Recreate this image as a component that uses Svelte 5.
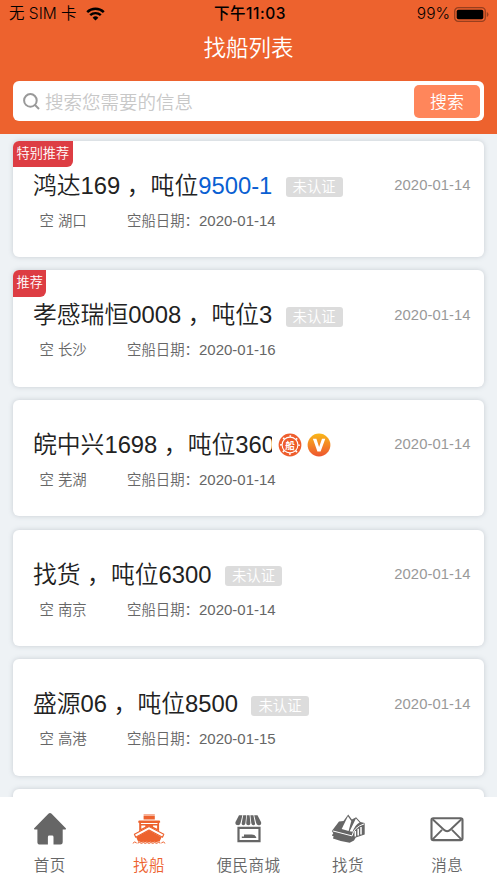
<script>
	const ships = [
		{ name: '鸿达169', tonnage: '9500-1', link: true, port: '湖口', empty: '2020-01-14', date: '2020-01-14', badge: '特别推荐' },
		{ name: '孝感瑞恒0008', tonnage: '3', port: '长沙', empty: '2020-01-16', date: '2020-01-14', badge: '推荐' },
		{ name: '皖中兴1698', tonnage: '360', port: '芜湖', empty: '2020-01-14', date: '2020-01-14', verified: true },
		{ name: '找货', tonnage: '6300', port: '南京', empty: '2020-01-14', date: '2020-01-14' },
		{ name: '盛源06', tonnage: '8500', port: '高港', empty: '2020-01-15', date: '2020-01-14' }
	]

	const tabs = [
		{ id: 'home', label: '首页' },
		{ id: 'ship', label: '找船' },
		{ id: 'shop', label: '便民商城' },
		{ id: 'cargo', label: '找货' },
		{ id: 'message', label: '消息' }
	]

	let keyword = $state('')
	let active = $state('ship')
</script>

<div class="app">
	<header>
		<div class="status">
			<div class="carrier">
				<span>无 SIM 卡</span>
				<svg width="19" height="14" viewBox="0 0 19 14">
					<path d="M1.2 5.1a12 12 0 0 1 16.6 0" fill="none" stroke="#000" stroke-width="2.5" />
					<path d="M4.2 8.2a7.7 7.7 0 0 1 10.6 0" fill="none" stroke="#000" stroke-width="2.4" />
					<path d="M6.6 10.7a4.2 4.2 0 0 1 5.8 0L9.5 13.6z" />
				</svg>
			</div>
			<div class="clock">下午11:03</div>
			<div class="battery">
				<span>99%</span>
				<svg width="35" height="15" viewBox="0 0 35 15">
					<rect x=".7" y=".7" width="30.6" height="13.6" rx="3.6" fill="none" stroke="#983f1e" stroke-width="1.3" />
					<rect x="2.7" y="2.7" width="26.6" height="9.6" rx="1.8" />
					<path d="M32.8 5v5q1.7-.7 1.7-2.5T32.8 5z" fill="#983f1e" />
				</svg>
			</div>
		</div>
		<h1>找船列表</h1>
		<div class="search">
			<svg width="17" height="17" viewBox="0 0 17 17" fill="none" stroke="#999" stroke-width="2">
				<circle cx="7.4" cy="7.4" r="6.3" />
				<path d="M12 12l4 4" />
			</svg>
			<input bind:value={keyword} placeholder="搜索您需要的信息" />
			<button>搜索</button>
		</div>
	</header>

	<main>
		{#each ships as ship (ship.name)}
			<article class="card">
				{#if ship.badge}
					<span class="badge">{ship.badge}</span>
				{/if}
				<div class="top">
					<h2>{ship.name}<span class="comma">，</span>吨位<span class:link={ship.link}>{ship.tonnage}</span></h2>
					{#if ship.verified}
						<svg class="mark" width="24" height="24" viewBox="0 0 24 24">
							<circle cx="12" cy="12" r="11.4" fill="#ee5d2c" />
							<circle cx="12" cy="12" r="7.9" fill="none" stroke="#fff" stroke-width="1.1" />
							<circle cx="12" cy="12" r="9" fill="none" stroke="#fff" stroke-width="1.7" stroke-dasharray="1.7 5.37" stroke-dashoffset=".85" />
							<text x="12" y="15.7" text-anchor="middle" class="seal">船</text>
						</svg>
						<svg class="mark" width="24" height="24" viewBox="0 0 24 24">
							<defs>
								<linearGradient id="vip" x1="0" y1="0" x2="0" y2="1">
									<stop offset="0" stop-color="#f9b719" />
									<stop offset="1" stop-color="#ee5530" />
								</linearGradient>
							</defs>
							<circle cx="12" cy="12" r="11.4" fill="url(#vip)" />
							<path d="M5.9 5.8h3.5l2.7 8.3 2.9-8.3h3.3l-4.7 12.7h-3.2z" fill="#fff" />
						</svg>
					{:else}
						<span class="tag">未认证</span>
					{/if}
					<time>{ship.date}</time>
				</div>
				<div class="info">
					<span class="port">空 {ship.port}</span>
					<span>空船日期：<span class="num">{ship.empty}</span></span>
				</div>
			</article>
		{/each}
		<article class="card"></article>
	</main>

	<nav>
		{#each tabs as tab (tab.id)}
			<button class="tab" class:active={active === tab.id} onclick={() => (active = tab.id)}>
				<svg width="34" height="34" viewBox="0 0 34 34" fill="currentColor">
					{#if tab.id === 'home'}
						<path d="M15.4 1.8q1.6-1.4 3.2 0l14.2 14.4q.7.8-.3 1.3h-2.8v12.7q0 2.3-2.3 2.3h-6.9v-7.6q0-1.4-1.4-1.4h-2.8q-1.4 0-1.4 1.4v7.6H7.1q-2.7 0-2.7-2.3V17.5H1.7q-1.3-.4-.5-1.3z" />
					{:else if tab.id === 'ship'}
						<path d="M11.6 2.4h11.2v1H11.6zM11.6 4h11.2v3.5H11.6z" />
						<path fill-rule="evenodd" d="M7.4 8.4h19.8q.9 0 .9.9v1.4h-1v8.5L17 14.6l-9.8 4.6v-8.5H6.3V9.300q0-.9 1.100-.9zM8.900 11v1h16.600v-1zM9.300 13.500v3.200l4-1.900v-1.300zM25.100 13.500h-4v1.300l4 1.900z" />
						<path d="M17 14.500l14.800 7.700-1.300 3L17 18 3.700 25.200l-1.300-3z" fill="#fff" stroke="currentColor" stroke-width="1.100" stroke-linejoin="round" />
						<path d="M17 18.300l12.500 6.900-2 4.500q-1.500-.6-3.100.8-1.900-1.600-3.800 0-1.900-1.600-3.800 0-1.900-1.600-3.800 0-1.900-1.600-3.800 0-1.400-1.400-3-.8l-2-4.500z" />
						<path d="M.8 31.300q1.900-2.600 3.900-.3M5.600 31.100q1.900-1.600 3.800.3 1.900-1.800 3.800 0 1.900-1.800 3.800 0 1.900-1.800 3.800 0 1.900-1.800 3.800 0 1.900-1.900 3.800-.3M29.300 31q2-2.300 3.900.3" fill="none" stroke="currentColor" stroke-width="1" />
					{:else if tab.id === 'shop'}
						<path d="M8 3.300h3.400L9.600 10.800q-.4 2.400-2.200 2.400-3.600 0-2.900-3.200zM12.200 3.300h3.100l-.9 8q-.4 1.900-2 1.900-2 0-1.700-1.900zM16 3.300h2.600l.8 8q0 1.900-2.100 1.900t-2.100-1.900zM19.400 3.300h3l1.600 8q.2 1.900-1.600 1.900-1.700 0-2.100-1.900zM23.200 3.300h3.300l3.500 6.700q.9 3.200-2.600 3.200-1.900 0-2.300-2.400z" />
						<path d="M7.500 15.900h21v13.200h-21z" fill="none" stroke="currentColor" stroke-width="2.200" />
						<path d="M13 22.500h7.800q3.900 0 4.700 3.600H10.800v-1.500H13z" />
					{:else if tab.id === 'cargo'}
						<path d="M8 9.500L12.500 9l4.700-6.400 3.700 5 4.200-2.300 4.400 4.700 4.200 1v11.400l-8.900 3-1.800 3.200-4.300 2.100Q9.500 29.500 2 26.500l.6-2.300L.8 23.400l1.500-2.100L.8 18.900z" />
						<path d="M16.900 4.200L10.700 17l6.900 2 2.700-9.900z" fill="#fff" />
						<path d="M24.900 6.400l-6.200 12.800 2.900.6q2.300-6.700 7-9.300z" fill="#fff" />
						<path d="M1.700 18.900l19.300 5q1.700-8.700 12.300-12.100" fill="none" stroke="#fff" stroke-width="1" />
						<path d="M24.300 24.500v-5.500M27.200 23.500v-6.800M30 22.500v-7.500" stroke="#fff" stroke-width="1.500" />
					{:else}
						<rect x="1.500" y="6.200" width="31" height="21.900" rx="1.800" fill="none" stroke="currentColor" stroke-width="2.100" />
						<path d="M2.600 7.300l11 10.200q3.500 3.400 7 0l10.800-10.200M2.600 27.300l9.400-9.500M31.400 27.300l-9.400-9.500" fill="none" stroke="currentColor" stroke-width="1.900" />
					{/if}
				</svg>
				<span>{tab.label}</span>
			</button>
		{/each}
	</nav>
</div>

<style>
	:global(body) {
		background: #eef2f5;
	}

	.app {
		display: flex;
		flex-direction: column;
		height: 883px;
		overflow: hidden;
		font-family: 'Liberation Sans', 'Noto Sans CJK SC', sans-serif;
		font-weight: 350;
		background: #eef2f5;
	}

	header {
		height: 134px;
		flex: none;
		background: #ed622e;
	}

	.status {
		display: grid;
		grid-template-columns: 1fr auto 1fr;
		align-items: center;
		height: 28px;
		padding: 0 8px 0 9px;
		font: 350 15.5px/28px Inter, 'Noto Sans CJK SC', sans-serif;
		color: #000;
	}

	.carrier,
	.battery {
		display: flex;
		align-items: center;
	}

	.carrier {
		gap: 9px;
	}

	.battery {
		justify-content: flex-end;
		gap: 4px;
	}

	.clock {
		padding-left: 2px;
		font-weight: 500;
		letter-spacing: 0.5px;
	}

	h1 {
		margin: 0;
		height: 40px;
		font-size: 22.5px;
		font-weight: 350;
		line-height: 42px;
		text-align: center;
		color: #fff;
	}

	.search {
		display: flex;
		align-items: center;
		box-sizing: border-box;
		height: 40px;
		margin: 13px 13px 0;
		padding: 0 4px 0 10px;
		border-radius: 6px;
		background: #fff;
	}

	.search input {
		flex: 1;
		min-width: 0;
		padding: 3px 0 0 5px;
		border: 0;
		outline: 0;
		font: inherit;
		font-size: 18.5px;
	}

	.search input::placeholder {
		color: #c8c8c8;
	}

	.search button {
		width: 66px;
		height: 33px;
		padding: 0 0 2px;
		border: 0;
		border-radius: 5px;
		background: #ff865b;
		color: #fff;
		font: inherit;
		font-size: 17px;
	}

	main {
		flex: 1;
		min-height: 0;
		overflow: hidden;
		padding: 6.5px 13.5px 0 13px;
	}

	.card {
		position: relative;
		box-sizing: border-box;
		height: 116.5px;
		margin-bottom: 13.2px;
		padding: 28px 13px 0 20px;
		border-radius: 6px;
		background: #fff;
		box-shadow: 0 0 5px rgba(100, 110, 125, 0.28);
	}

	.badge {
		position: absolute;
		top: 0;
		left: 0;
		padding: 0 3.5px;
		border-radius: 6px 0 6px 0;
		background: #dd3d43;
		color: #fff;
		font-size: 13.2px;
		line-height: 26.5px;
	}

	.top {
		display: flex;
		align-items: center;
		height: 34px;
	}

	h2 {
		max-width: 239px;
		margin: 0;
		overflow: hidden;
		font-size: 23.8px;
		font-weight: 350;
		line-height: 34px;
		white-space: nowrap;
		color: #222;
	}

	.comma {
		margin-left: 6.5px;
	}

	.link {
		color: #0a5fd2;
	}

	.tag {
		margin: 3px 0 0 13.5px;
		padding: 0 7px;
		border-radius: 3px;
		background: #dcdcdc;
		color: #fff;
		font-size: 14.4px;
		line-height: 20px;
	}

	.mark {
		margin-left: 5.5px;
	}

	.seal {
		font-size: 9.5px;
		font-weight: 700;
		fill: #fff;
	}

	time {
		margin-left: auto;
		margin-top: -1px;
		font-size: 14.8px;
		letter-spacing: 0.05px;
		color: #999;
	}

	.info {
		display: flex;
		margin-top: 7px;
		padding-left: 6.5px;
		font-size: 14.4px;
		line-height: 22px;
		color: #666;
	}

	.port {
		width: 87.5px;
	}

	.num {
		font-size: 15px;
	}

	nav {
		display: grid;
		grid-template-columns: repeat(5, 1fr);
		flex: none;
		height: 86.5px;
		background: #fff;
	}

	.tab {
		display: flex;
		flex-direction: column;
		align-items: center;
		padding: 15px 0 0;
		border: 0;
		background: none;
		font: inherit;
		font-size: 15.5px;
		letter-spacing: 0.5px;
		line-height: 24px;
		color: #666;
	}

	.tab span {
		margin-top: 8px;
	}

	.tab.active {
		color: #ed622e;
	}
</style>
